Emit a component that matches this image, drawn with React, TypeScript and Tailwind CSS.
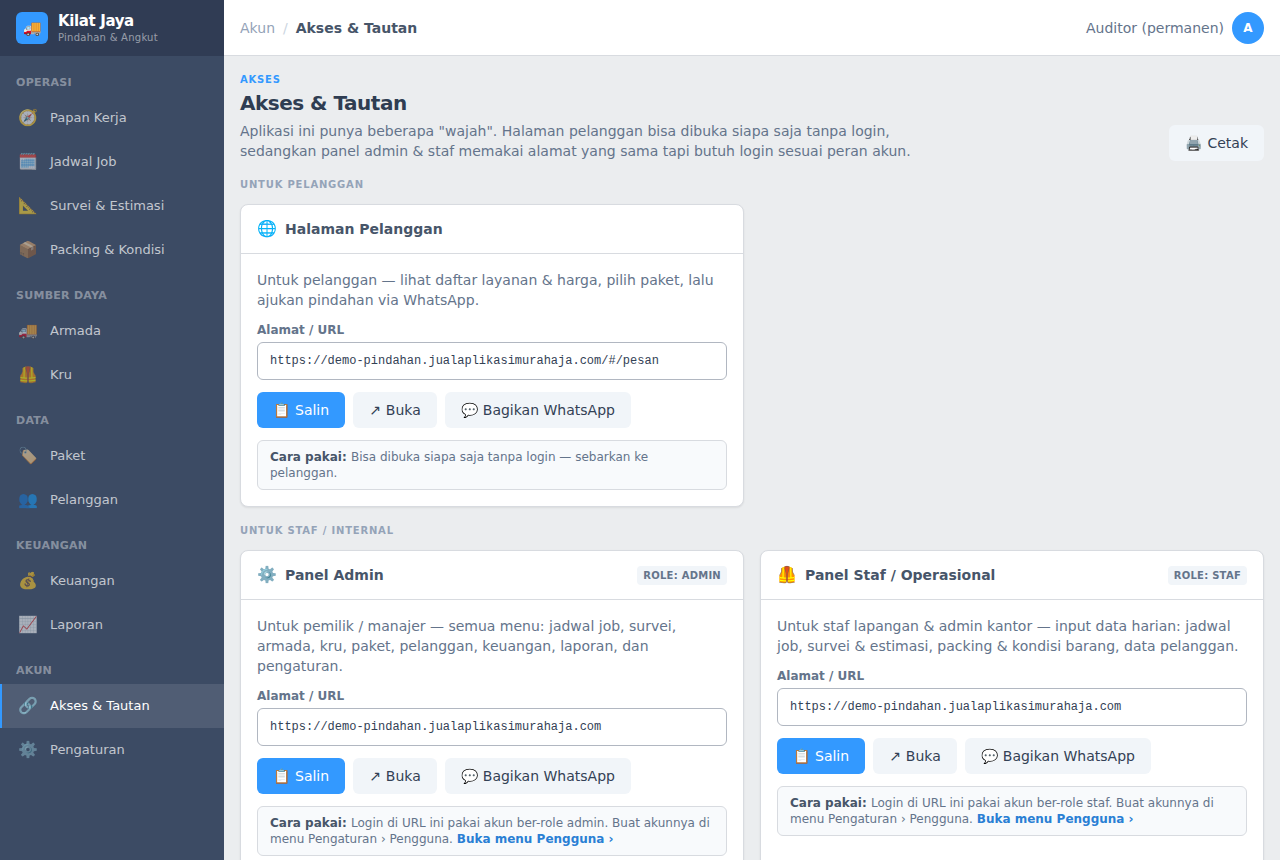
import { useId } from "react";
import type { ReactNode } from "react";
import { clsx } from "clsx";

type NavItem = { icon: string; label: string; href: string };

const NAV: { title: string; items: NavItem[] }[] = [
  {
    title: "Operasi",
    items: [
      { icon: "🧭", label: "Papan Kerja", href: "#/papan" },
      { icon: "🗓️", label: "Jadwal Job", href: "#/jadwal" },
      { icon: "📐", label: "Survei & Estimasi", href: "#/survei" },
      { icon: "📦", label: "Packing & Kondisi", href: "#/packing" },
    ],
  },
  {
    title: "Sumber Daya",
    items: [
      { icon: "🚚", label: "Armada", href: "#/armada" },
      { icon: "🦺", label: "Kru", href: "#/kru" },
    ],
  },
  {
    title: "Data",
    items: [
      { icon: "🏷️", label: "Paket", href: "#/paket" },
      { icon: "👥", label: "Pelanggan", href: "#/pelanggan" },
    ],
  },
  {
    title: "Keuangan",
    items: [
      { icon: "💰", label: "Keuangan", href: "#/keuangan" },
      { icon: "📈", label: "Laporan", href: "#/laporan" },
    ],
  },
  {
    title: "Akun",
    items: [
      { icon: "🔗", label: "Akses & Tautan", href: "#/akses" },
      { icon: "⚙️", label: "Pengaturan", href: "#/pengaturan" },
    ],
  },
];

const ACTIVE_HREF = "#/akses";
const BASE_URL = "https://demo-pindahan.jualaplikasimurahaja.com";

function Sidebar() {
  return (
    <aside className="sticky top-0 flex h-screen w-56 shrink-0 flex-col bg-[#3c4b64]">
      <div className="flex h-14 shrink-0 items-center gap-2.5 bg-[#303c54] px-4">
        <span className="flex size-8 items-center justify-center rounded-md bg-[#3399ff] text-[15px]">
          🚚
        </span>
        <div>
          <p className="text-[15px] leading-[18px] font-bold tracking-tight text-white">
            Kilat Jaya
          </p>
          <p className="text-[10px] leading-[15px] tracking-wide text-white/50">
            Pindahan &amp; Angkut
          </p>
        </div>
      </div>
      <nav className="min-h-0 flex-1 overflow-hidden pt-[3px]">
        {NAV.map((group) => (
          <div key={group.title}>
            <h2 className="px-4 pt-4 pb-[5px] text-[11px] leading-4 font-bold tracking-wide text-white/40 uppercase">
              {group.title}
            </h2>
            {group.items.map((item) => {
              const active = item.href === ACTIVE_HREF;
              return (
                <a
                  key={item.href}
                  href={item.href}
                  aria-current={active ? "page" : undefined}
                  className={clsx(
                    "flex h-11 items-center gap-3 border-l-2 px-4 text-[13px]",
                    active
                      ? "border-[#3399ff] bg-white/10 text-white"
                      : "border-transparent text-white/70 hover:bg-white/5"
                  )}
                >
                  <span className="flex w-5 justify-center text-base opacity-80">{item.icon}</span>
                  {item.label}
                </a>
              );
            })}
          </div>
        ))}
      </nav>
    </aside>
  );
}

function Topbar() {
  return (
    <header className="sticky top-0 z-10 flex h-14 items-center justify-between border-b border-[#d8dbe0] bg-white px-4 text-sm">
      <nav aria-label="Breadcrumb" className="flex items-center gap-2">
        <a href="#/akun" className="text-[#94a3b8]">
          Akun
        </a>
        <span className="text-[#cbd5e1]">/</span>
        <span className="font-semibold text-[#475569]">Akses &amp; Tautan</span>
      </nav>
      <div className="flex items-center gap-2">
        <span className="text-[#64748b]">Auditor (permanen)</span>
        <span className="flex size-8 items-center justify-center rounded-full bg-[#3399ff] text-xs font-bold text-white">
          A
        </span>
      </div>
    </header>
  );
}

function Button({
  icon,
  primary = false,
  children,
}: {
  icon: string;
  primary?: boolean;
  children: ReactNode;
}) {
  return (
    <button
      type="button"
      className={clsx(
        "inline-flex h-9 shrink-0 items-center gap-[5px] rounded-md px-4 text-sm whitespace-nowrap",
        primary ? "bg-[#3399ff] text-white" : "bg-[#f1f5f9] text-[#334155]"
      )}
    >
      <span>{icon}</span>
      {children}
    </button>
  );
}

function SectionLabel({ children }: { children: ReactNode }) {
  return (
    <h2 className="mt-4 mb-3 text-[10px] leading-[15px] font-bold tracking-[0.08em] text-[#94a3b8] uppercase">
      {children}
    </h2>
  );
}

function AccessCard({
  icon,
  title,
  role,
  description,
  url,
  children,
}: {
  icon: string;
  title: string;
  role?: string;
  description: string;
  url: string;
  children: ReactNode;
}) {
  const inputId = useId();

  return (
    <article className="rounded-lg border border-[#d8dbe0] bg-white shadow-[0_1px_2px_rgba(0,0,0,0.08)]">
      <div className="flex h-[49px] items-center gap-2 border-b border-[#d8dbe0] px-4">
        <span className="w-5 text-base">{icon}</span>
        <h3 className="flex-1 text-sm font-semibold text-[#475569]">{title}</h3>
        {role && (
          <span className="rounded bg-[#f1f5f9] px-1.5 py-0.5 text-[10px] leading-[15px] font-semibold tracking-wide text-[#64748b] uppercase">
            Role: {role}
          </span>
        )}
      </div>
      <div className="flex flex-col gap-3 p-4">
        <p className="text-sm text-[#64748b]">{description}</p>
        <div>
          <label htmlFor={inputId} className="mb-1 block text-xs font-semibold text-[#64748b]">
            Alamat / URL
          </label>
          <input
            id={inputId}
            readOnly
            value={url}
            className="block h-[38px] w-full rounded-md border border-[#b1b7c1] bg-white px-3 font-['Liberation_Mono',monospace] text-xs text-[#334155]"
          />
        </div>
        <div className="flex flex-wrap gap-2">
          <Button icon="📋" primary>
            Salin
          </Button>
          <Button icon="↗">Buka</Button>
          <Button icon="💬">Bagikan WhatsApp</Button>
        </div>
        <p className="rounded-md border border-[#d8dbe0] bg-[#f8fafc] px-3 py-2 text-xs text-[#64748b]">
          <strong className="font-semibold text-[#475569]">Cara pakai: </strong>
          {children}
        </p>
      </div>
    </article>
  );
}

function UserMenuLink() {
  return (
    <a href="#/pengaturan/pengguna" className="font-semibold text-[#2a7fd4] hover:underline">
      Buka menu Pengguna ›
    </a>
  );
}

export default function App() {
  return (
    <div className="flex min-h-screen bg-[#ebedef] font-['DejaVu_Sans',sans-serif]">
      <Sidebar />
      <div className="min-w-0 flex-1">
        <Topbar />
        <main className="p-4">
          <div className="flex items-end justify-between gap-4">
            <div className="max-w-2xl">
              <p className="text-[10px] leading-[15px] font-bold tracking-[0.08em] text-[#3399ff] uppercase">
                Akses
              </p>
              <h1 className="mt-0.5 text-xl font-bold tracking-tight text-[#2f3d52]">
                Akses &amp; Tautan
              </h1>
              <p className="mt-1 text-sm text-[#64748b]">
                Aplikasi ini punya beberapa "wajah". Halaman pelanggan bisa dibuka siapa saja tanpa
                login, sedangkan panel admin &amp; staf memakai alamat yang sama tapi butuh login
                sesuai peran akun.
              </p>
            </div>
            <Button icon="🖨️">Cetak</Button>
          </div>

          <SectionLabel>Untuk Pelanggan</SectionLabel>
          <div className="grid gap-4 lg:grid-cols-2">
            <AccessCard
              icon="🌐"
              title="Halaman Pelanggan"
              description="Untuk pelanggan — lihat daftar layanan & harga, pilih paket, lalu ajukan pindahan via WhatsApp."
              url={`${BASE_URL}/#/pesan`}
            >
              Bisa dibuka siapa saja tanpa login — sebarkan ke pelanggan.
            </AccessCard>
          </div>

          <SectionLabel>Untuk Staf / Internal</SectionLabel>
          <div className="grid gap-4 lg:grid-cols-2">
            <AccessCard
              icon="⚙️"
              title="Panel Admin"
              role="admin"
              description="Untuk pemilik / manajer — semua menu: jadwal job, survei, armada, kru, paket, pelanggan, keuangan, laporan, dan pengaturan."
              url={BASE_URL}
            >
              Login di URL ini pakai akun ber-role admin. Buat akunnya di menu Pengaturan ›
              Pengguna. <UserMenuLink />
            </AccessCard>
            <AccessCard
              icon="🦺"
              title="Panel Staf / Operasional"
              role="staf"
              description="Untuk staf lapangan & admin kantor — input data harian: jadwal job, survei & estimasi, packing & kondisi barang, data pelanggan."
              url={BASE_URL}
            >
              Login di URL ini pakai akun ber-role staf. Buat akunnya di menu Pengaturan ›
              Pengguna. <UserMenuLink />
            </AccessCard>
          </div>
        </main>
      </div>
    </div>
  );
}
